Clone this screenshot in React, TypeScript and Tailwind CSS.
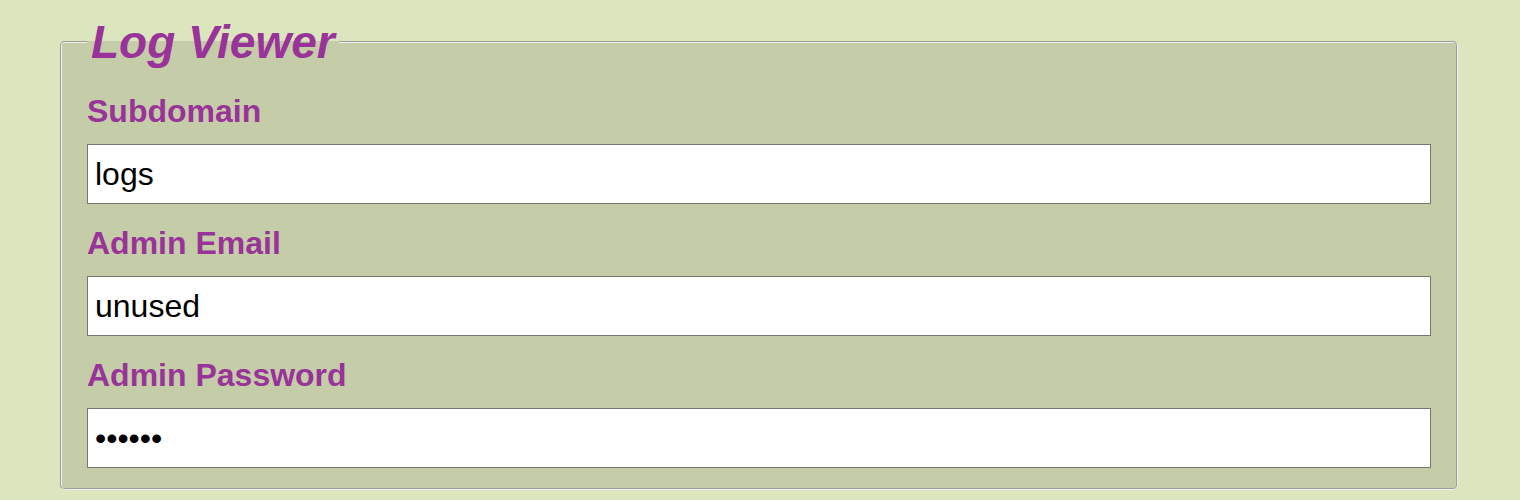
export default function App() {
  return (
    <div className="min-h-screen bg-[#dce6be] pt-[15px] font-['Liberation_Sans',Arial,sans-serif]">
      <fieldset className="ml-[60px] mr-[62px] rounded-[5px] border-2 border-[#f0f0f0] [border-style:groove]! bg-[#c4cda8] px-[25px] pt-[5px] pb-[20px]">
        <legend className="px-1 text-[46px] font-bold italic leading-[normal] text-[#993399]">
          Log Viewer
        </legend>
        <Field label="Subdomain" value="logs" first />
        <Field label="Admin Email" value="unused" />
        <Field label="Admin Password" value="secret" type="password" />
      </fieldset>
    </div>
  );
}

function Field({
  label,
  value,
  type = 'text',
  first,
}: {
  label: string;
  value: string;
  type?: string;
  first?: boolean;
}) {
  return (
    <>
      <label
        className={`block text-[32px] font-bold leading-[normal] text-[#993399] mb-[14px] ${
          first ? 'mt-[19px]' : 'mt-[21px]'
        }`}
      >
        {label}
      </label>
      <input
        type={type}
        defaultValue={value}
        className="block h-[60px] w-full border border-[#767676] bg-white px-[7px] text-[32px] text-black outline-none"
      />
    </>
  );
}
